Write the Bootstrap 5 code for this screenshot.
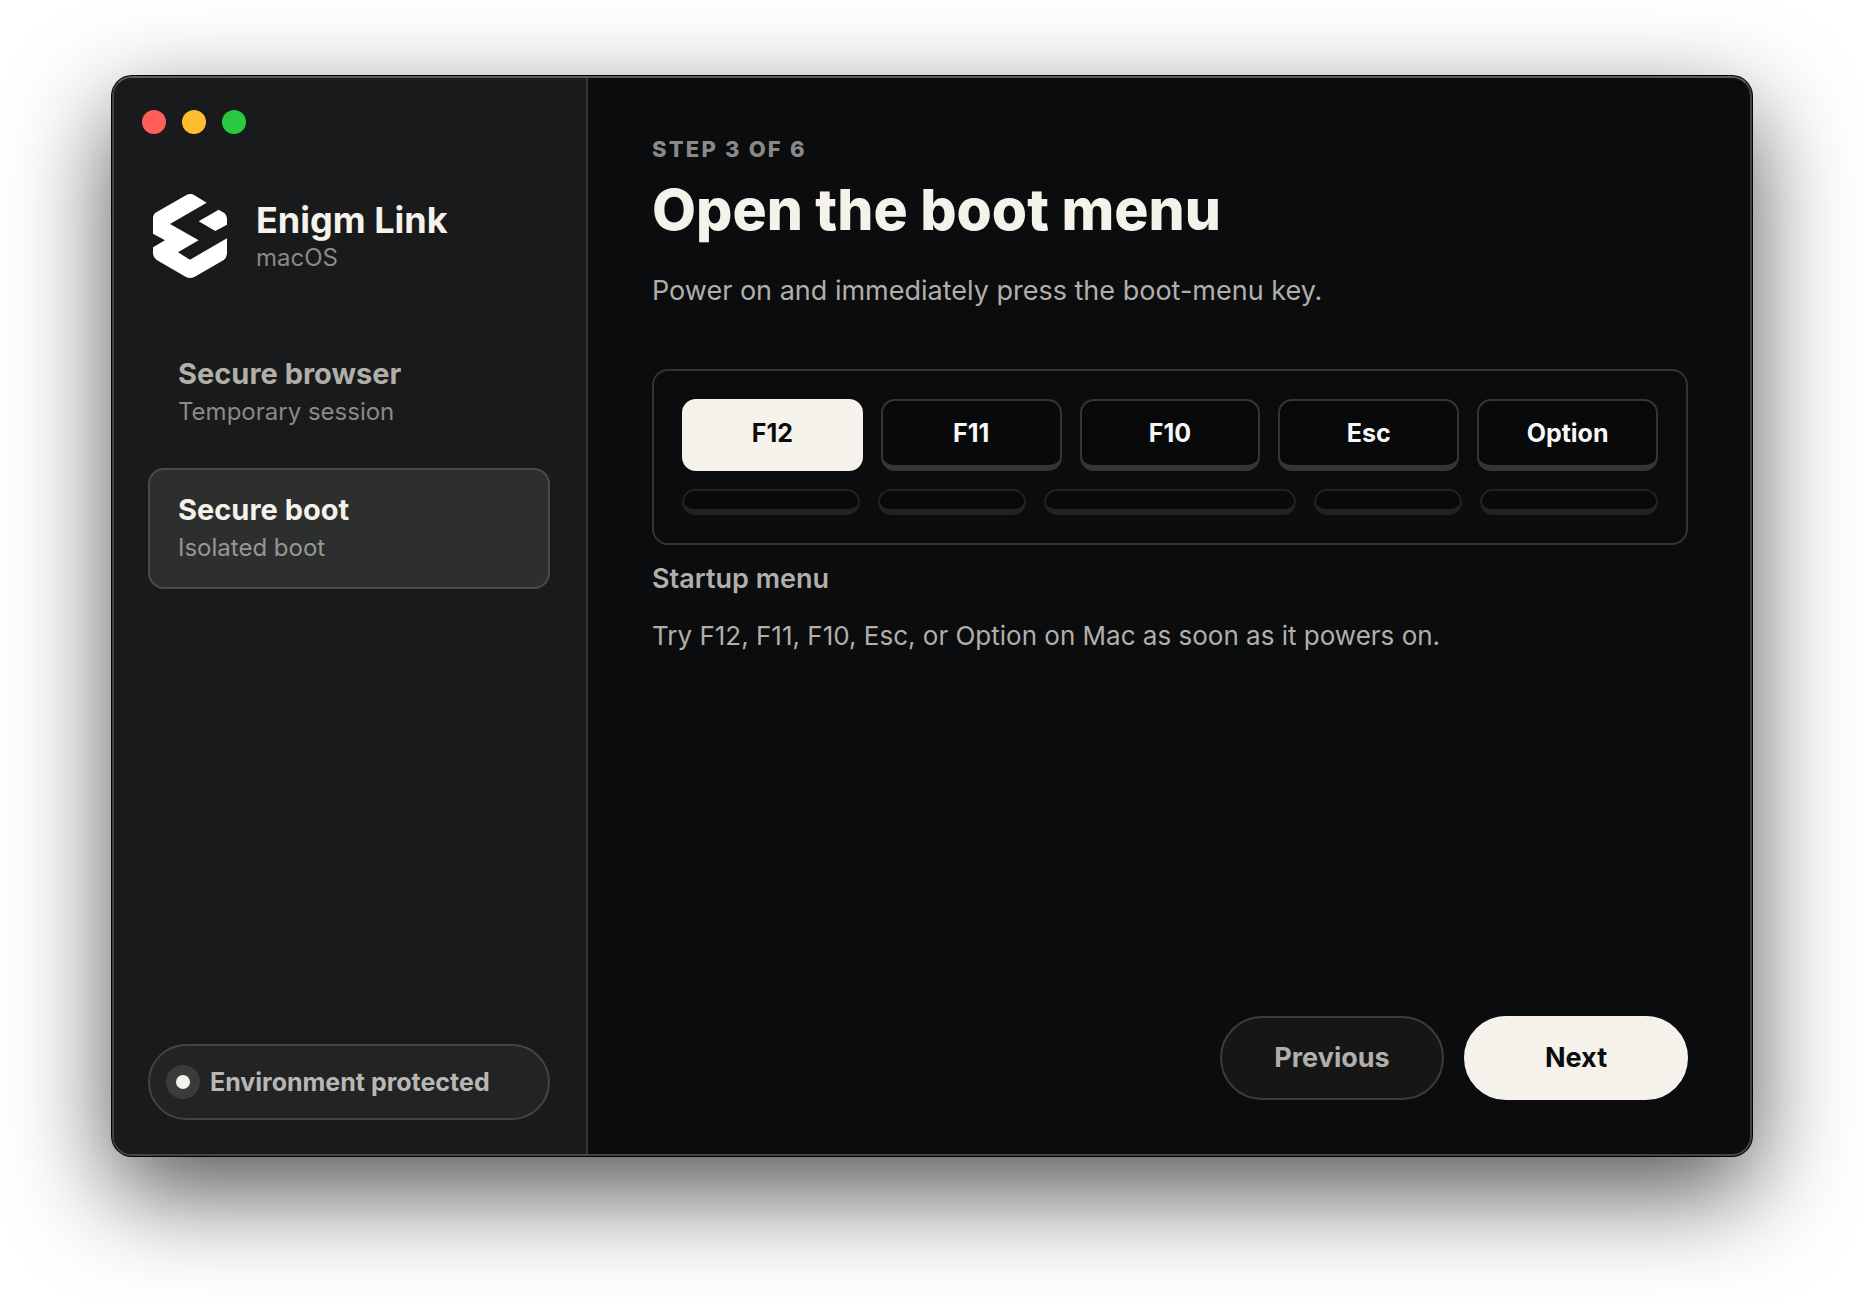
<!DOCTYPE html>
<html lang="en">
<head>
<meta charset="utf-8">
<meta name="viewport" content="width=device-width, initial-scale=1">
<title>Enigm Link</title>
<link href="https://cdn.jsdelivr.net/npm/bootstrap@5.3.0/dist/css/bootstrap.min.css" rel="stylesheet">
<style>
:root { --ink: #f5f1eb; --soft: #b2afaa; --dim: #8b8986; --night: #0a0c0e; }
body { background: #fff; color: var(--ink); font-family: Inter, "Liberation Sans", sans-serif; padding: 76px 112px 148px; min-height: 100vh; }
.app-window { background: var(--night); border: 2px solid #424344; border-top-color: #5b5c5c; border-radius: 20px; box-shadow: 0 0 0 1px #000, 0 36px 100px rgba(0,0,0,.68); overflow: hidden; }
.side { width: 474px; background: #191a1b; border-right: 2px solid #343637; padding: 32px 36px 34px 34px; }
.lights { gap: 16px; margin: 0 0 60px -6px; }
.light { width: 24px; height: 24px; border-radius: 50%; }
.light-close { background: #ff5f57; } .light-min { background: #febc2e; } .light-max { background: #28c840; }
.brand-row { gap: 24px; margin-bottom: 54px; }
.brand-text { padding-top: 2px; }
.brand-name { font-size: 36px; line-height: 42px; font-weight: 700; }
.sub-text { font-size: 24px; line-height: 34px; color: var(--dim); }
.modes { gap: 15px; }
.mode { border: 2px solid transparent; border-radius: 16px; padding: 22px 28px; background: transparent; color: var(--soft); text-align: left; }
.mode.active { background: #2d2f2e; border-color: #4a4b4b; color: var(--ink); }
.mode.active .sub-text { color: #979694; }
.mode-name { font-size: 29px; line-height: 36px; font-weight: 700; margin-bottom: 3px; }
.status { height: 76px; border: 2px solid #434445; border-radius: 38px; background: #212324; padding: 0 16px; gap: 10px; color: #bab7b2; font-size: 25px; font-weight: 700; }
.status-label { padding-top: 2px; }
.status-dot { width: 34px; height: 34px; border: 10px solid #3a3c3b; border-radius: 50%; background: var(--ink); }
.pane { padding: 56px 62px 54px 64px; min-width: 0; }
.step { font-size: 22px; line-height: 30px; font-weight: 800; letter-spacing: .1em; color: var(--dim); margin-bottom: 14px; }
h1 { font-size: 57px; line-height: 64px; font-weight: 800; margin-bottom: 28px; }
.intro { font-size: 27px; line-height: 41px; color: var(--soft); margin-bottom: 58px; }
.keyboard { border: 2px solid #323435; border-radius: 16px; padding: 28px; gap: 18px; }
.key-row { gap: 18px; }
.keycap { height: 72px; border: 2px solid #343536; border-bottom-width: 6px; border-radius: 14px; background: #08090b; color: #f7f7f7; font-size: 25px; font-weight: 700; flex: 1 1 0; padding: 2px 0 0; }
.keycap.active { background: var(--ink); border-color: var(--ink); color: var(--night); }
.blank-row { display: grid; grid-template-columns: 1.2fr 1fr 1.7fr 1fr 1.2fr; gap: 18px; }
.blank-key { height: 26px; border: 2px solid #202224; border-bottom-width: 6px; border-radius: 13px; background: #08090b; }
.note-title, .note { font-size: 26px; line-height: 36px; color: var(--soft); }
.note-title { font-size: 27px; font-weight: 600; margin: 16px 0 21px; }
.steps-nav { gap: 20px; }
.nav-pill { width: 224px; height: 84px; border: 2px solid #3b3c3c; border-radius: 42px; background: #161616; color: var(--soft); font-size: 27px; font-weight: 700; }
.nav-pill.primary { background: var(--ink); border-color: var(--ink); color: var(--night); }
</style>
</head>
<body class="d-flex flex-column">
<div class="app-window d-flex flex-grow-1">
  <aside class="side d-flex flex-column flex-shrink-0">
    <div class="lights d-flex">
      <span class="light light-close"></span><span class="light light-min"></span><span class="light light-max"></span>
    </div>
    <div class="brand-row d-flex align-items-center">
      <svg width="84" height="84" viewBox="24 42 252 252" fill="#fff" aria-hidden="true">
        <path d="M138 46Q150 38 162 45L200 68L90 132L176 181L114 217L150 239L261 175V219Q261 233 250 241L163 291Q150 297 138 291L50 240Q39 232 39 219V202L75 181L39 161V114Q39 103 49 97Z"/>
        <path d="M236 89L253 99Q261 106 261 114V134L226 153L176 124Z"/>
      </svg>
      <div class="brand-text">
        <div class="brand-name">Enigm Link</div>
        <div class="sub-text">macOS</div>
      </div>
    </div>
    <nav class="modes d-flex flex-column">
      <button type="button" class="mode">
        <span class="mode-name d-block">Secure browser</span>
        <span class="sub-text d-block">Temporary session</span>
      </button>
      <button type="button" class="mode active" aria-current="page">
        <span class="mode-name d-block">Secure boot</span>
        <span class="sub-text d-block">Isolated boot</span>
      </button>
    </nav>
    <div class="status d-flex align-items-center mt-auto">
      <span class="status-dot flex-shrink-0"></span>
      <span class="status-label">Environment protected</span>
    </div>
  </aside>
  <main class="pane d-flex flex-column flex-grow-1">
    <div class="step text-uppercase">Step 3 of 6</div>
    <h1>Open the boot menu</h1>
    <p class="intro">Power on and immediately press the boot-menu key.</p>
    <div class="keyboard d-flex flex-column">
      <div class="key-row d-flex">
        <button type="button" class="keycap active">F12</button>
        <button type="button" class="keycap">F11</button>
        <button type="button" class="keycap">F10</button>
        <button type="button" class="keycap">Esc</button>
        <button type="button" class="keycap">Option</button>
      </div>
      <div class="blank-row" aria-hidden="true">
        <span class="blank-key"></span>
        <span class="blank-key"></span>
        <span class="blank-key"></span>
        <span class="blank-key"></span>
        <span class="blank-key"></span>
      </div>
    </div>
    <div class="note-title">Startup menu</div>
    <p class="note mb-0">Try F12, F11, F10, Esc, or Option on Mac as soon as it powers on.</p>
    <div class="steps-nav d-flex justify-content-end mt-auto">
      <button type="button" class="nav-pill">Previous</button>
      <button type="button" class="nav-pill primary">Next</button>
    </div>
  </main>
</div>
<script src="https://cdn.jsdelivr.net/npm/bootstrap@5.3.0/dist/js/bootstrap.bundle.min.js"></script>
</body>
</html>
